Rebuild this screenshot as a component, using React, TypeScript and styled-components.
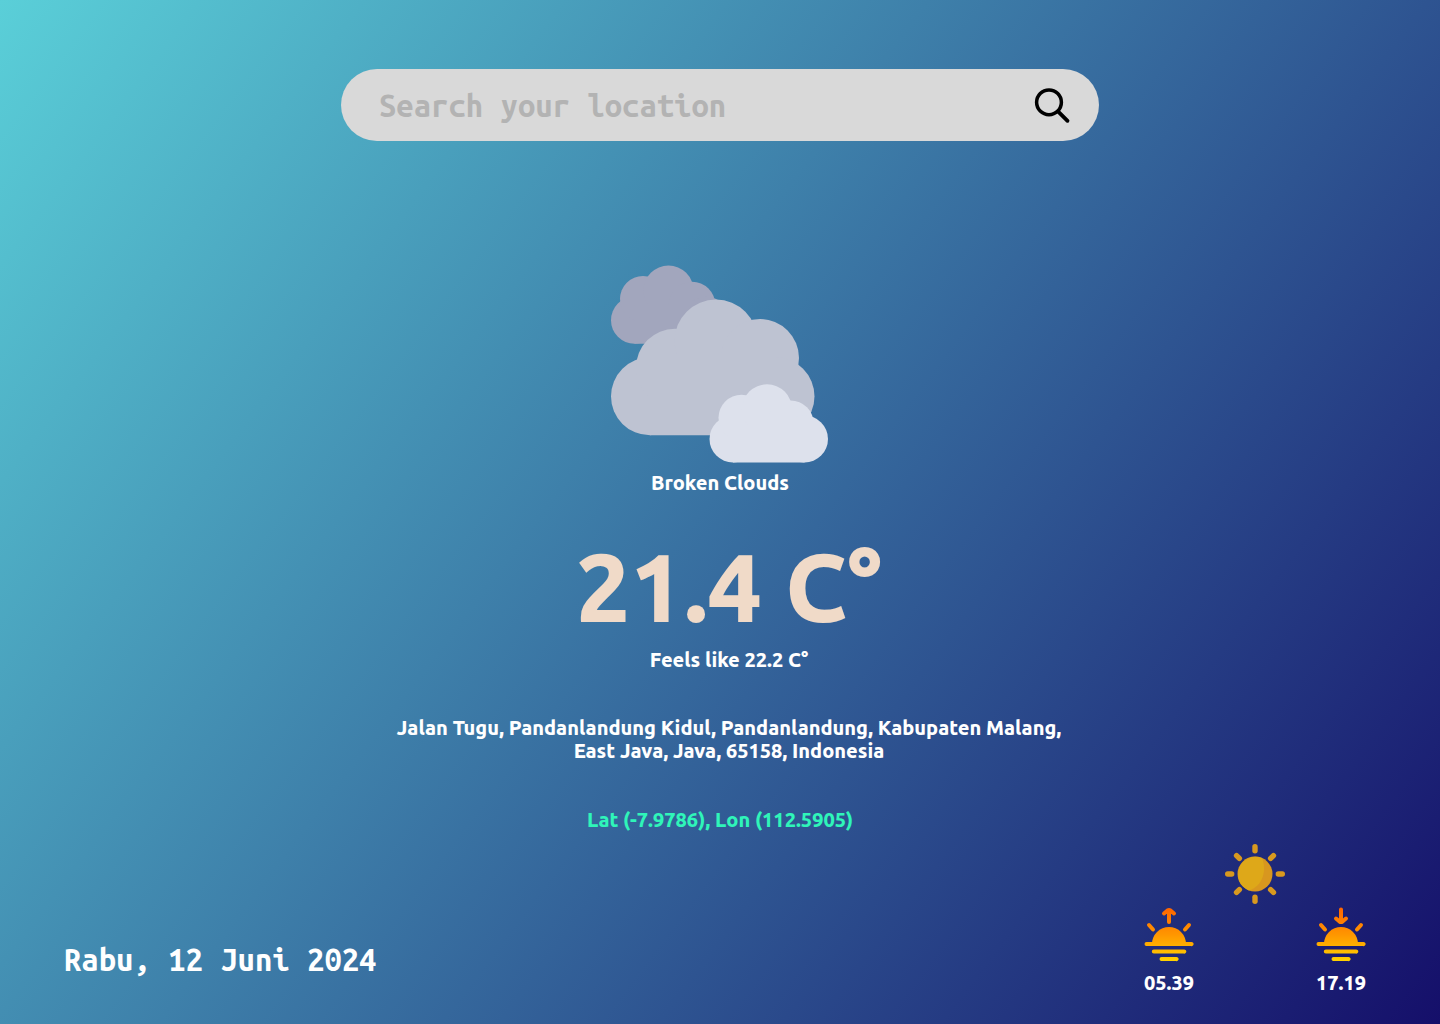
import React from "react";
import styled, { createGlobalStyle } from "styled-components";

const GlobalStyle = createGlobalStyle`
  *, *::before, *::after { box-sizing: border-box; }
  body {
    margin: 0;
    font-family: "Ubuntu", "Noto Sans", sans-serif;
    font-weight: 800;
    color: #ffffff;
  }
`;

const mono = `"Ubuntu Mono", "DejaVu Sans Mono", monospace`;

const Page = styled.div`
  min-height: 100vh;
  display: flex;
  flex-direction: column;
  padding: 69px 74px 30px 64px;
  background: linear-gradient(127deg, #5acfd8 0%, #3e80aa 42%, #150f6a 100%);
`;

const SearchForm = styled.form`
  align-self: center;
  display: flex;
  align-items: center;
  width: 100%;
  max-width: 758px;
  height: 72px;
  margin-left: 10px;
  padding: 0 28px 0 38px;
  border-radius: 36px;
  background: #d9d9d9;
`;

const SearchInput = styled.input`
  flex: 1;
  min-width: 0;
  padding: 2px 0 0;
  border: 0;
  outline: 0;
  background: transparent;
  color: #333333;
  font: 700 31px/40px ${mono};
  &::placeholder { color: #b3b3b3; opacity: 1; }
`;

const SearchButton = styled.button`
  display: flex;
  padding: 0;
  border: 0;
  background: transparent;
  color: #000000;
  cursor: pointer;
`;

const Weather = styled.main`
  display: flex;
  flex-direction: column;
  align-items: center;
  margin: 124px 0 12px 10px;
  text-align: center;
`;

const Label = styled.p<{ $color?: string }>`
  margin: 0;
  font-size: 20px;
  line-height: 23px;
  color: ${(p) => p.$color ?? "#ffffff"};
`;

const Condition = styled.section`
  display: flex;
  flex-direction: column;
  align-items: center;
  gap: 8px;
`;

const Reading = styled.section`
  display: flex;
  flex-direction: column;
  align-items: center;
  margin: 38px 0 46px;
  padding-left: 18px;
`;

const Temperature = styled.h1`
  margin: 0 0 6px;
  font-size: 96px;
  font-weight: 800;
  line-height: 110px;
  color: #f0dac8;
`;

const Address = styled.address`
  max-width: 700px;
  margin-top: 45px;
  font-style: normal;
  font-size: 20px;
  line-height: 23px;
`;

const Footer = styled.footer`
  display: flex;
  justify-content: space-between;
  align-items: flex-end;
  margin-top: auto;
`;

const DateText = styled.time`
  padding-bottom: 14px;
  font: 700 31px/40px ${mono};
`;

const SunTimes = styled.section`
  display: grid;
  grid-template-columns: auto auto;
  justify-content: space-between;
  row-gap: 3px;
  width: 222px;
`;

const SunSlot = styled.div`
  grid-column: 1 / -1;
  display: flex;
  justify-content: center;
`;

const SunEvent = styled.div`
  display: flex;
  flex-direction: column;
  align-items: center;
  gap: 9px;
  width: 50px;
`;

const Drawing = styled.svg`
  display: block;
  flex: none;
`;

function SmallCloud({ x, y, color }: { x: number; y: number; color: string }) {
  return (
    <g transform={`translate(${x} ${y})`} fill={color}>
      <circle cx="23.5" cy="54.7" r="23.5" />
      <circle cx="32" cy="33.5" r="23" />
      <circle cx="57.5" cy="25" r="25" />
      <circle cx="81" cy="39.5" r="23.3" />
      <circle cx="95" cy="54.7" r="23.5" />
      <path d="M23.5 40h71.5v38.2h-71.5z" />
    </g>
  );
}

function Clouds() {
  return (
    <Drawing width="218" height="198" viewBox="0 0 218 198" role="img" aria-label="Clouds">
      <SmallCloud x={0} y={0.5} color="#a2a6bd" />
      <g fill="#bec3d2">
        <circle cx="39" cy="131.3" r="39" />
        <circle cx="64" cy="102.7" r="39" />
        <circle cx="105" cy="76" r="41.5" />
        <circle cx="149" cy="93" r="39" />
        <circle cx="164.5" cy="131.3" r="39" />
        <path d="M39 90h125v80.3h-125z" />
      </g>
      <SmallCloud x={98.5} y={119.3} color="#dde1ec" />
    </Drawing>
  );
}

function Sun() {
  return (
    <Drawing width="60" height="60" viewBox="0 0 60 60" aria-hidden="true">
      <circle cx="30" cy="30" r="17.5" fill="#d8971f" />
      <path d="M37 14A17.5 17.5 0 1 0 24 46.5C38 42 42 26 37 14z" fill="#dea819" />
      <g stroke="#d8991f" strokeWidth="5.4" strokeLinecap="round">
        {[0, 45, 90, 135, 180, 225, 270, 315].map((a) => (
          <path key={a} d="M30 2.7v4" transform={`rotate(${a} 30 30)${a % 90 ? " translate(0 1.2)" : ""}`} />
        ))}
      </g>
    </Drawing>
  );
}

function Horizon({ setting }: { setting?: boolean }) {
  const id = setting ? "sunset" : "sunrise";
  return (
    <Drawing width="50" height="55" viewBox="0 0 50 55" aria-hidden="true">
      <defs>
        <linearGradient id={id} gradientUnits="userSpaceOnUse" x1="0" y1="0" x2="0" y2="55">
          <stop offset="0" stopColor="#ff6400" />
          <stop offset="0.5" stopColor="#ff9600" />
          <stop offset="1" stopColor="#ffd400" />
        </linearGradient>
      </defs>
      <path d="M8 37a17 17 0 0 1 34 0z" fill={`url(#${id})`} />
      <g fill="none" stroke={`url(#${id})`} strokeWidth="4" strokeLinecap="round" strokeLinejoin="round">
        <path d="M2.5 37H47.5L47.51 37.01M9.8 44.5H40.2L40.21 44.51M17.5 52H32.5L32.51 52.01" />
        <path d="M5 18l4 4.5M45 18l-4 4.5" />
        <path
          d={
            setting
              ? "M25 2.5V14M20 11.5L23.5 14.5Q25 15.5 26.5 14.5L30 11.5"
              : "M25 4V15M20 6.5L23.5 3.5Q25 2.5 26.5 3.5L30 6.5"
          }
        />
      </g>
    </Drawing>
  );
}

function SearchIcon() {
  return (
    <Drawing width="38" height="38" viewBox="0 0 38 38" fill="none" stroke="currentColor" aria-hidden="true">
      <circle cx="16" cy="16.3" r="12.4" strokeWidth="3.5" />
      <path d="M25 25.3l9.5 9.5" strokeWidth="3.8" strokeLinecap="round" />
    </Drawing>
  );
}

export default function App() {
  return (
    <Page>
      <GlobalStyle />
      <SearchForm role="search" onSubmit={(e) => e.preventDefault()}>
        <SearchInput type="text" aria-label="Search your location" placeholder="Search your location" />
        <SearchButton type="submit" aria-label="Search">
          <SearchIcon />
        </SearchButton>
      </SearchForm>

      <Weather>
        <Condition>
          <Clouds />
          <Label>Broken Clouds</Label>
        </Condition>
        <Reading>
          <Temperature>21.4 C°</Temperature>
          <Label>Feels like 22.2 C°</Label>
          <Address>
            Jalan Tugu, Pandanlandung Kidul, Pandanlandung, Kabupaten Malang, East Java, Java, 65158, Indonesia
          </Address>
        </Reading>
        <Label $color="#2ff5b9">Lat (-7.9786), Lon (112.5905)</Label>
      </Weather>

      <Footer>
        <DateText dateTime="2024-06-12">Rabu, 12 Juni 2024</DateText>
        <SunTimes aria-label="Sunrise and sunset">
          <SunSlot>
            <Sun />
          </SunSlot>
          <SunEvent>
            <Horizon />
            <Label>05.39</Label>
          </SunEvent>
          <SunEvent>
            <Horizon setting />
            <Label>17.19</Label>
          </SunEvent>
        </SunTimes>
      </Footer>
    </Page>
  );
}
